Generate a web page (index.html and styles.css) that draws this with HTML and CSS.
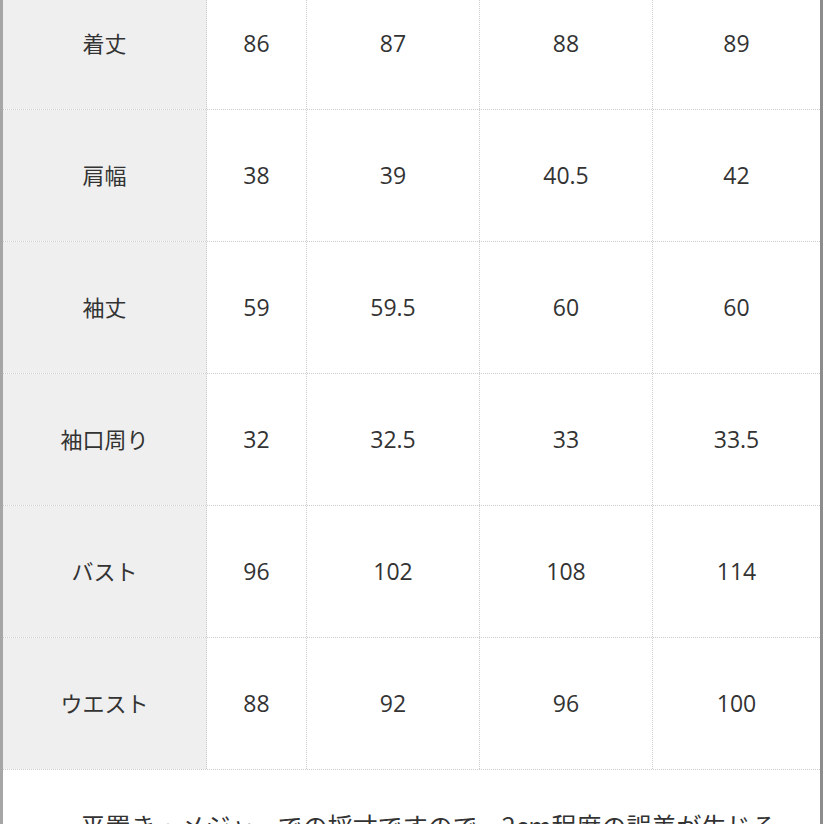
FILE: index.html
```html
<!DOCTYPE html>
<html lang="ja">
<head>
<meta charset="utf-8">
<link rel="stylesheet" href="styles.css">
</head>
<body>
<div class="frame">
  <div class="table">
    <div class="row">
      <div class="cell label">着丈</div><div class="cell">86</div><div class="cell">87</div><div class="cell">88</div><div class="cell last">89</div>
    </div>
    <div class="row">
      <div class="cell label">肩幅</div><div class="cell">38</div><div class="cell">39</div><div class="cell">40.5</div><div class="cell last">42</div>
    </div>
    <div class="row">
      <div class="cell label">袖丈</div><div class="cell">59</div><div class="cell">59.5</div><div class="cell">60</div><div class="cell last">60</div>
    </div>
    <div class="row">
      <div class="cell label">袖口周り</div><div class="cell">32</div><div class="cell">32.5</div><div class="cell">33</div><div class="cell last">33.5</div>
    </div>
    <div class="row">
      <div class="cell label">バスト</div><div class="cell">96</div><div class="cell">102</div><div class="cell">108</div><div class="cell last">114</div>
    </div>
    <div class="row">
      <div class="cell label">ウエスト</div><div class="cell">88</div><div class="cell">92</div><div class="cell">96</div><div class="cell last">100</div>
    </div>
  </div>
  <p class="note">平置き・メジャーでの採寸ですので、2cm程度の誤差が生じる</p>
</div>
</body>
</html>
```
FILE: styles.css
```css
html, body {
  margin: 0;
  padding: 0;
  background: #ffffff;
  overflow: hidden;
}
body {
  width: 824px;
  height: 824px;
}
.frame {
  width: 817px;
  height: 900px;
  margin-top: -22px;
  border-left: 3px solid #a6a6a6;
  border-right: 3px solid #8c8c8c;
  background: #ffffff;
  color: #333333;
}
.table {
  display: flex;
  flex-direction: column;
}
.row {
  display: grid;
  grid-template-columns: 204px 100px 173px 173px 167px;
  height: 132px;
  border-bottom: 1px dotted #cccccc;
  box-sizing: border-box;
}
.cell {
  display: flex;
  align-items: center;
  justify-content: center;
  border-right: 1px dotted #cccccc;
  font-family: "Open Sans", "Noto Sans", sans-serif;
  font-size: 23px;
  padding-bottom: 2px;
}
.cell.last {
  border-right: none;
}
.cell.label {
  background: #efefef;
  font-family: "Noto Sans CJK JP", sans-serif;
  font-size: 22px;
  padding-bottom: 4px;
}
.note {
  margin: 0;
  padding-top: 37px;
  text-align: center;
  font-family: "Noto Sans CJK JP", sans-serif;
  font-size: 25px;
  padding-left: 34px;
  color: #333333;
  white-space: nowrap;
}
```
